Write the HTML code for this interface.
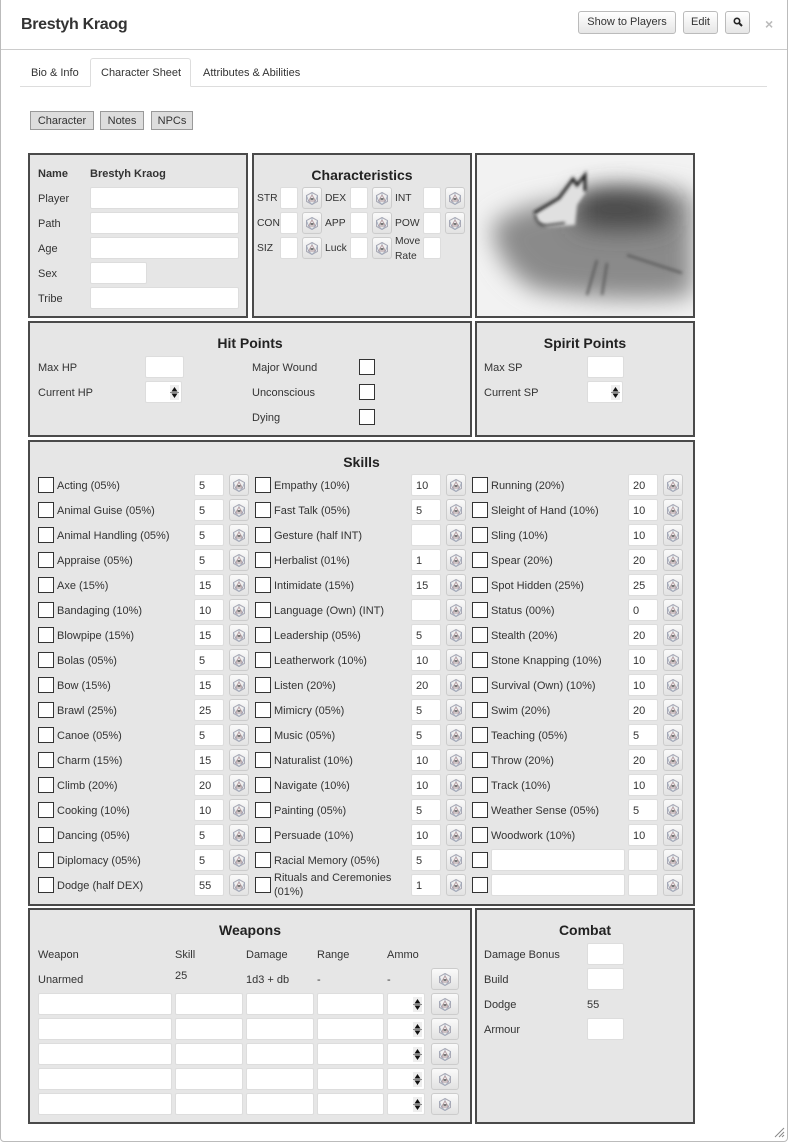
<!DOCTYPE html>
<html><head><meta charset="utf-8">
<style>
*{box-sizing:border-box;margin:0;padding:0}
body{width:789px;height:1142px;background:#fff;font-family:"Liberation Sans",Arial,sans-serif;font-size:11px;color:#333;position:relative;overflow:hidden}
.a{position:absolute}
.modal{position:absolute;left:0;top:-2px;width:788px;height:1144px;border:1px solid #bbb;border-radius:0 0 4px 4px}
.btn{position:absolute;top:11px;height:23px;border:1px solid #bbb;border-radius:3px;background:linear-gradient(#fff,#e6e6e6);font-size:11px;line-height:21px;text-align:center;color:#333}
.sb{position:absolute;top:111px;height:19px;border:1px solid #999;background:#ddd;line-height:19px;text-align:center;font-size:11px}
.p{position:absolute;background:#e6e6e6;border:2px solid #4a4a4a}
.t{position:absolute;left:0;right:0;text-align:center;font-weight:bold;font-size:14px;color:#222}
.l{position:absolute;line-height:14px;white-space:nowrap;top:0}
.i{position:absolute;height:22px;background:#fff;border:1px solid #ddd;border-radius:2px;line-height:22px;padding-left:4px;font-weight:normal}
.d{position:absolute;height:22px;width:20px;border:1px solid #ccc;border-radius:3px;background:linear-gradient(#fafafa,#e2e2e2);display:flex;align-items:center;justify-content:center}
.d svg{width:12px;height:13px}
.c{position:absolute;width:16px;height:16px;background:#fff;border:1px solid #333}
.sp{position:absolute;right:2px;top:3px;width:9px;height:15px}
.col{position:absolute;top:474px}
.r{position:relative;height:25px;width:217px}
.r .c{left:0;top:3px}
.r .n{position:absolute;left:19px;top:5px;line-height:14px;white-space:nowrap}
.r .i{left:156px;top:0;width:30px}
.r .d{left:191px;top:0}
.ch{font-size:10.3px}
</style></head><body>
<svg width="0" height="0" style="position:absolute"><defs>
<g id="dd"><polygon points="6,0.5 11.5,3.5 11.5,9.5 6,12.5 0.5,9.5 0.5,3.5" fill="none" stroke="#a9a9b5" stroke-width="1"/><polygon points="6,3 9.5,9 2.5,9" fill="none" stroke="#b39aa0" stroke-width="0.9"/><path d="M6 0.5V3M0.5 3.5L2.5 9M11.5 3.5L9.5 9M6 12.5L2.5 9M6 12.5L9.5 9" stroke="#9aa7bb" stroke-width="0.7" fill="none"/><rect x="4.5" y="6" width="3" height="2" fill="#777"/></g>
<g id="spn"><rect x="0" y="0" width="9" height="15" fill="#eee"/><path d="M1.5 6.5L4.5 2L7.5 6.5Z M1.5 8.5L4.5 13L7.5 8.5Z" fill="#111"/><path d="M0 7.5H9" stroke="#888"/></g>
</defs></svg>
<div class="modal"></div>
<div class="a" style="left:21px;top:16px;font-size:16px;font-weight:bold;color:#333;letter-spacing:-0.3px">Brestyh Kraog</div>
<div class="btn" style="left:578px;width:98px">Show to Players</div>
<div class="btn" style="left:683px;width:35px">Edit</div>
<div class="btn" style="left:725px;width:25px"><svg width="10" height="10" viewBox="0 0 10 10" style="margin-top:5px"><circle cx="4" cy="4" r="2.7" fill="none" stroke="#222" stroke-width="1.6"/><path d="M6 6L9 9" stroke="#222" stroke-width="2"/></svg></div>
<div class="a" style="left:765px;top:16px;font-size:14px;color:#bbb;font-weight:bold">×</div>
<div class="a" style="left:1px;top:49px;width:786px;height:1px;background:#ccc"></div>
<div class="a" style="left:20px;top:86px;width:747px;height:1px;background:#ddd"></div>
<div class="a" style="left:90px;top:58px;width:101px;height:29px;background:#fff;border:1px solid #ddd;border-bottom-color:#fff;border-radius:3px 3px 0 0"></div>
<div class="l" style="left:31px;top:66px">Bio &amp; Info</div>
<div class="l" style="left:101px;top:66px">Character Sheet</div>
<div class="l" style="left:203px;top:66px">Attributes &amp; Abilities</div>
<div class="sb" style="left:30px;width:64px">Character</div>
<div class="sb" style="left:100px;width:44px">Notes</div>
<div class="sb" style="left:151px;width:42px">NPCs</div>

<div class="p" style="left:28px;top:153px;width:220px;height:165px"></div>
<div class="l" style="left:38px;top:167px;font-weight:bold">Name</div>
<div class="l" style="left:90px;top:167px;font-weight:bold">Brestyh Kraog</div>
<div class="l" style="left:38px;top:192px">Player</div><div class="i" style="left:90px;top:187px;width:149px"></div>
<div class="l" style="left:38px;top:217px">Path</div><div class="i" style="left:90px;top:212px;width:149px"></div>
<div class="l" style="left:38px;top:242px">Age</div><div class="i" style="left:90px;top:237px;width:149px"></div>
<div class="l" style="left:38px;top:267px">Sex</div><div class="i" style="left:90px;top:262px;width:57px"></div>
<div class="l" style="left:38px;top:292px">Tribe</div><div class="i" style="left:90px;top:287px;width:149px"></div>

<div class="p" style="left:252px;top:153px;width:220px;height:165px"><div class="t" style="top:12px">Characteristics</div></div>
<div class="l ch" style="left:257px;top:192px">STR</div><div class="i" style="left:280px;top:187px;width:18px"></div><div class="d" style="left:302px;top:187px"><svg viewBox="0 0 12 13"><use href="#dd"/></svg></div>
<div class="l ch" style="left:325px;top:192px">DEX</div><div class="i" style="left:350px;top:187px;width:18px"></div><div class="d" style="left:372px;top:187px"><svg viewBox="0 0 12 13"><use href="#dd"/></svg></div>
<div class="l ch" style="left:395px;top:192px">INT</div><div class="i" style="left:423px;top:187px;width:18px"></div><div class="d" style="left:445px;top:187px"><svg viewBox="0 0 12 13"><use href="#dd"/></svg></div>
<div class="l ch" style="left:257px;top:217px">CON</div><div class="i" style="left:280px;top:212px;width:18px"></div><div class="d" style="left:302px;top:212px"><svg viewBox="0 0 12 13"><use href="#dd"/></svg></div>
<div class="l ch" style="left:325px;top:217px">APP</div><div class="i" style="left:350px;top:212px;width:18px"></div><div class="d" style="left:372px;top:212px"><svg viewBox="0 0 12 13"><use href="#dd"/></svg></div>
<div class="l ch" style="left:395px;top:217px">POW</div><div class="i" style="left:423px;top:212px;width:18px"></div><div class="d" style="left:445px;top:212px"><svg viewBox="0 0 12 13"><use href="#dd"/></svg></div>
<div class="l ch" style="left:257px;top:242px">SIZ</div><div class="i" style="left:280px;top:237px;width:18px"></div><div class="d" style="left:302px;top:237px"><svg viewBox="0 0 12 13"><use href="#dd"/></svg></div>
<div class="l ch" style="left:325px;top:242px">Luck</div><div class="i" style="left:350px;top:237px;width:18px"></div><div class="d" style="left:372px;top:237px"><svg viewBox="0 0 12 13"><use href="#dd"/></svg></div>
<div class="l ch" style="left:395px;top:234px;line-height:15px">Move<br>Rate</div><div class="i" style="left:423px;top:237px;width:18px"></div>

<div class="p" style="left:475px;top:153px;width:220px;height:165px;background:#f2f2f2;overflow:hidden">
<svg width="216" height="161" viewBox="0 0 216 161">
<defs><filter id="bl" filterUnits="userSpaceOnUse" x="-60" y="-60" width="340" height="280"><feGaussianBlur stdDeviation="12"/></filter><filter id="bl2" filterUnits="userSpaceOnUse" x="-60" y="-60" width="340" height="280"><feGaussianBlur stdDeviation="1.5"/></filter></defs>
<path d="M15 70 Q40 50 90 45 Q160 25 216 40 L216 140 Q150 150 60 135 Q20 115 15 70Z" fill="#8a8a8a" filter="url(#bl)"/>
<path d="M100 40 Q140 25 190 45 L190 70 Q140 80 100 70Z" fill="#4a4a4a" filter="url(#bl)"/>
<path d="M58 58 L82 42 L95 24 L108 22 L108 38 L100 50 L98 70 L70 72 L60 66Z" fill="#e0e0e0" filter="url(#bl2)"/>
<path d="M57 58 L82 43 L96 24 L100 30 L108 20 L108 36" fill="none" stroke="#222" stroke-width="3" filter="url(#bl2)"/>
<path d="M58 60 Q60 72 72 70 L88 68" fill="none" stroke="#333" stroke-width="2" filter="url(#bl2)"/>
<path d="M120 105 L110 140 M130 108 L125 140 M150 100 L205 118" stroke="#555" stroke-width="2" fill="none" filter="url(#bl2)"/>
</svg></div>

<div class="p" style="left:28px;top:321px;width:444px;height:116px"><div class="t" style="top:12px">Hit Points</div></div>
<div class="l" style="left:38px;top:361px">Max HP</div><div class="i" style="left:145px;top:356px;width:39px"></div>
<div class="l" style="left:38px;top:386px">Current HP</div><div class="i" style="left:145px;top:381px;width:37px"><svg class="sp" viewBox="0 0 9 15"><use href="#spn"/></svg></div>
<div class="l" style="left:252px;top:361px">Major Wound</div><div class="c" style="left:359px;top:359px"></div>
<div class="l" style="left:252px;top:386px">Unconscious</div><div class="c" style="left:359px;top:384px"></div>
<div class="l" style="left:252px;top:411px">Dying</div><div class="c" style="left:359px;top:409px"></div>

<div class="p" style="left:475px;top:321px;width:220px;height:116px"><div class="t" style="top:12px">Spirit Points</div></div>
<div class="l" style="left:484px;top:361px">Max SP</div><div class="i" style="left:587px;top:356px;width:37px"></div>
<div class="l" style="left:484px;top:386px">Current SP</div><div class="i" style="left:587px;top:381px;width:36px"><svg class="sp" viewBox="0 0 9 15"><use href="#spn"/></svg></div>

<div class="p" style="left:28px;top:440px;width:667px;height:466px"><div class="t" style="top:12px">Skills</div></div>
<div class="col" style="left:38px">
<div class="r"><i class="c"></i><span class="n">Acting (05%)</span><b class="i">5</b><u class="d"><svg viewBox="0 0 12 13"><use href="#dd"/></svg></u></div>
<div class="r"><i class="c"></i><span class="n">Animal Guise (05%)</span><b class="i">5</b><u class="d"><svg viewBox="0 0 12 13"><use href="#dd"/></svg></u></div>
<div class="r"><i class="c"></i><span class="n">Animal Handling (05%)</span><b class="i">5</b><u class="d"><svg viewBox="0 0 12 13"><use href="#dd"/></svg></u></div>
<div class="r"><i class="c"></i><span class="n">Appraise (05%)</span><b class="i">5</b><u class="d"><svg viewBox="0 0 12 13"><use href="#dd"/></svg></u></div>
<div class="r"><i class="c"></i><span class="n">Axe (15%)</span><b class="i">15</b><u class="d"><svg viewBox="0 0 12 13"><use href="#dd"/></svg></u></div>
<div class="r"><i class="c"></i><span class="n">Bandaging (10%)</span><b class="i">10</b><u class="d"><svg viewBox="0 0 12 13"><use href="#dd"/></svg></u></div>
<div class="r"><i class="c"></i><span class="n">Blowpipe (15%)</span><b class="i">15</b><u class="d"><svg viewBox="0 0 12 13"><use href="#dd"/></svg></u></div>
<div class="r"><i class="c"></i><span class="n">Bolas (05%)</span><b class="i">5</b><u class="d"><svg viewBox="0 0 12 13"><use href="#dd"/></svg></u></div>
<div class="r"><i class="c"></i><span class="n">Bow (15%)</span><b class="i">15</b><u class="d"><svg viewBox="0 0 12 13"><use href="#dd"/></svg></u></div>
<div class="r"><i class="c"></i><span class="n">Brawl (25%)</span><b class="i">25</b><u class="d"><svg viewBox="0 0 12 13"><use href="#dd"/></svg></u></div>
<div class="r"><i class="c"></i><span class="n">Canoe (05%)</span><b class="i">5</b><u class="d"><svg viewBox="0 0 12 13"><use href="#dd"/></svg></u></div>
<div class="r"><i class="c"></i><span class="n">Charm (15%)</span><b class="i">15</b><u class="d"><svg viewBox="0 0 12 13"><use href="#dd"/></svg></u></div>
<div class="r"><i class="c"></i><span class="n">Climb (20%)</span><b class="i">20</b><u class="d"><svg viewBox="0 0 12 13"><use href="#dd"/></svg></u></div>
<div class="r"><i class="c"></i><span class="n">Cooking (10%)</span><b class="i">10</b><u class="d"><svg viewBox="0 0 12 13"><use href="#dd"/></svg></u></div>
<div class="r"><i class="c"></i><span class="n">Dancing (05%)</span><b class="i">5</b><u class="d"><svg viewBox="0 0 12 13"><use href="#dd"/></svg></u></div>
<div class="r"><i class="c"></i><span class="n">Diplomacy (05%)</span><b class="i">5</b><u class="d"><svg viewBox="0 0 12 13"><use href="#dd"/></svg></u></div>
<div class="r"><i class="c"></i><span class="n">Dodge (half DEX)</span><b class="i">55</b><u class="d"><svg viewBox="0 0 12 13"><use href="#dd"/></svg></u></div>
</div>
<div class="col" style="left:255px">
<div class="r"><i class="c"></i><span class="n">Empathy (10%)</span><b class="i">10</b><u class="d"><svg viewBox="0 0 12 13"><use href="#dd"/></svg></u></div>
<div class="r"><i class="c"></i><span class="n">Fast Talk (05%)</span><b class="i">5</b><u class="d"><svg viewBox="0 0 12 13"><use href="#dd"/></svg></u></div>
<div class="r"><i class="c"></i><span class="n">Gesture (half INT)</span><b class="i"></b><u class="d"><svg viewBox="0 0 12 13"><use href="#dd"/></svg></u></div>
<div class="r"><i class="c"></i><span class="n">Herbalist (01%)</span><b class="i">1</b><u class="d"><svg viewBox="0 0 12 13"><use href="#dd"/></svg></u></div>
<div class="r"><i class="c"></i><span class="n">Intimidate (15%)</span><b class="i">15</b><u class="d"><svg viewBox="0 0 12 13"><use href="#dd"/></svg></u></div>
<div class="r"><i class="c"></i><span class="n">Language (Own) (INT)</span><b class="i"></b><u class="d"><svg viewBox="0 0 12 13"><use href="#dd"/></svg></u></div>
<div class="r"><i class="c"></i><span class="n">Leadership (05%)</span><b class="i">5</b><u class="d"><svg viewBox="0 0 12 13"><use href="#dd"/></svg></u></div>
<div class="r"><i class="c"></i><span class="n">Leatherwork (10%)</span><b class="i">10</b><u class="d"><svg viewBox="0 0 12 13"><use href="#dd"/></svg></u></div>
<div class="r"><i class="c"></i><span class="n">Listen (20%)</span><b class="i">20</b><u class="d"><svg viewBox="0 0 12 13"><use href="#dd"/></svg></u></div>
<div class="r"><i class="c"></i><span class="n">Mimicry (05%)</span><b class="i">5</b><u class="d"><svg viewBox="0 0 12 13"><use href="#dd"/></svg></u></div>
<div class="r"><i class="c"></i><span class="n">Music (05%)</span><b class="i">5</b><u class="d"><svg viewBox="0 0 12 13"><use href="#dd"/></svg></u></div>
<div class="r"><i class="c"></i><span class="n">Naturalist (10%)</span><b class="i">10</b><u class="d"><svg viewBox="0 0 12 13"><use href="#dd"/></svg></u></div>
<div class="r"><i class="c"></i><span class="n">Navigate (10%)</span><b class="i">10</b><u class="d"><svg viewBox="0 0 12 13"><use href="#dd"/></svg></u></div>
<div class="r"><i class="c"></i><span class="n">Painting (05%)</span><b class="i">5</b><u class="d"><svg viewBox="0 0 12 13"><use href="#dd"/></svg></u></div>
<div class="r"><i class="c"></i><span class="n">Persuade (10%)</span><b class="i">10</b><u class="d"><svg viewBox="0 0 12 13"><use href="#dd"/></svg></u></div>
<div class="r"><i class="c"></i><span class="n">Racial Memory (05%)</span><b class="i">5</b><u class="d"><svg viewBox="0 0 12 13"><use href="#dd"/></svg></u></div>
<div class="r"><i class="c"></i><span class="n" style="top:-3px;line-height:14px">Rituals and Ceremonies<br>(01%)</span><b class="i">1</b><u class="d"><svg viewBox="0 0 12 13"><use href="#dd"/></svg></u></div>
</div>
<div class="col" style="left:472px">
<div class="r"><i class="c"></i><span class="n">Running (20%)</span><b class="i">20</b><u class="d"><svg viewBox="0 0 12 13"><use href="#dd"/></svg></u></div>
<div class="r"><i class="c"></i><span class="n">Sleight of Hand (10%)</span><b class="i">10</b><u class="d"><svg viewBox="0 0 12 13"><use href="#dd"/></svg></u></div>
<div class="r"><i class="c"></i><span class="n">Sling (10%)</span><b class="i">10</b><u class="d"><svg viewBox="0 0 12 13"><use href="#dd"/></svg></u></div>
<div class="r"><i class="c"></i><span class="n">Spear (20%)</span><b class="i">20</b><u class="d"><svg viewBox="0 0 12 13"><use href="#dd"/></svg></u></div>
<div class="r"><i class="c"></i><span class="n">Spot Hidden (25%)</span><b class="i">25</b><u class="d"><svg viewBox="0 0 12 13"><use href="#dd"/></svg></u></div>
<div class="r"><i class="c"></i><span class="n">Status (00%)</span><b class="i">0</b><u class="d"><svg viewBox="0 0 12 13"><use href="#dd"/></svg></u></div>
<div class="r"><i class="c"></i><span class="n">Stealth (20%)</span><b class="i">20</b><u class="d"><svg viewBox="0 0 12 13"><use href="#dd"/></svg></u></div>
<div class="r"><i class="c"></i><span class="n">Stone Knapping (10%)</span><b class="i">10</b><u class="d"><svg viewBox="0 0 12 13"><use href="#dd"/></svg></u></div>
<div class="r"><i class="c"></i><span class="n">Survival (Own) (10%)</span><b class="i">10</b><u class="d"><svg viewBox="0 0 12 13"><use href="#dd"/></svg></u></div>
<div class="r"><i class="c"></i><span class="n">Swim (20%)</span><b class="i">20</b><u class="d"><svg viewBox="0 0 12 13"><use href="#dd"/></svg></u></div>
<div class="r"><i class="c"></i><span class="n">Teaching (05%)</span><b class="i">5</b><u class="d"><svg viewBox="0 0 12 13"><use href="#dd"/></svg></u></div>
<div class="r"><i class="c"></i><span class="n">Throw (20%)</span><b class="i">20</b><u class="d"><svg viewBox="0 0 12 13"><use href="#dd"/></svg></u></div>
<div class="r"><i class="c"></i><span class="n">Track (10%)</span><b class="i">10</b><u class="d"><svg viewBox="0 0 12 13"><use href="#dd"/></svg></u></div>
<div class="r"><i class="c"></i><span class="n">Weather Sense (05%)</span><b class="i">5</b><u class="d"><svg viewBox="0 0 12 13"><use href="#dd"/></svg></u></div>
<div class="r"><i class="c"></i><span class="n">Woodwork (10%)</span><b class="i">10</b><u class="d"><svg viewBox="0 0 12 13"><use href="#dd"/></svg></u></div>
<div class="r"><i class="c"></i><b class="i" style="left:19px;width:134px"></b><b class="i"></b><u class="d"><svg viewBox="0 0 12 13"><use href="#dd"/></svg></u></div>
<div class="r"><i class="c"></i><b class="i" style="left:19px;width:134px"></b><b class="i"></b><u class="d"><svg viewBox="0 0 12 13"><use href="#dd"/></svg></u></div>
</div>

<div class="p" style="left:28px;top:908px;width:444px;height:216px"><div class="t" style="top:12px">Weapons</div></div>
<div class="l" style="left:38px;top:948px">Weapon</div>
<div class="l" style="left:175px;top:948px">Skill</div>
<div class="l" style="left:246px;top:948px">Damage</div>
<div class="l" style="left:317px;top:948px">Range</div>
<div class="l" style="left:387px;top:948px">Ammo</div>
<div class="l" style="left:38px;top:973px">Unarmed</div>
<div class="l" style="left:175px;top:969px">25</div>
<div class="l" style="left:246px;top:973px">1d3 + db</div>
<div class="l" style="left:317px;top:973px">-</div>
<div class="l" style="left:387px;top:973px">-</div>
<div class="d" style="left:431px;top:968px;width:28px"><svg viewBox="0 0 12 13"><use href="#dd"/></svg></div>
<div style="position:absolute;left:0;top:993px">
<div style="position:absolute;top:0"><b class="i" style="left:38px;width:134px"></b><b class="i" style="left:175px;width:68px"></b><b class="i" style="left:246px;width:68px"></b><b class="i" style="left:317px;width:67px"></b><b class="i" style="left:387px;width:38px"><svg class="sp" viewBox="0 0 9 15"><use href="#spn"/></svg></b><u class="d" style="left:431px;width:28px"><svg viewBox="0 0 12 13"><use href="#dd"/></svg></u></div>
<div style="position:absolute;top:25px"><b class="i" style="left:38px;width:134px"></b><b class="i" style="left:175px;width:68px"></b><b class="i" style="left:246px;width:68px"></b><b class="i" style="left:317px;width:67px"></b><b class="i" style="left:387px;width:38px"><svg class="sp" viewBox="0 0 9 15"><use href="#spn"/></svg></b><u class="d" style="left:431px;width:28px"><svg viewBox="0 0 12 13"><use href="#dd"/></svg></u></div>
<div style="position:absolute;top:50px"><b class="i" style="left:38px;width:134px"></b><b class="i" style="left:175px;width:68px"></b><b class="i" style="left:246px;width:68px"></b><b class="i" style="left:317px;width:67px"></b><b class="i" style="left:387px;width:38px"><svg class="sp" viewBox="0 0 9 15"><use href="#spn"/></svg></b><u class="d" style="left:431px;width:28px"><svg viewBox="0 0 12 13"><use href="#dd"/></svg></u></div>
<div style="position:absolute;top:75px"><b class="i" style="left:38px;width:134px"></b><b class="i" style="left:175px;width:68px"></b><b class="i" style="left:246px;width:68px"></b><b class="i" style="left:317px;width:67px"></b><b class="i" style="left:387px;width:38px"><svg class="sp" viewBox="0 0 9 15"><use href="#spn"/></svg></b><u class="d" style="left:431px;width:28px"><svg viewBox="0 0 12 13"><use href="#dd"/></svg></u></div>
<div style="position:absolute;top:100px"><b class="i" style="left:38px;width:134px"></b><b class="i" style="left:175px;width:68px"></b><b class="i" style="left:246px;width:68px"></b><b class="i" style="left:317px;width:67px"></b><b class="i" style="left:387px;width:38px"><svg class="sp" viewBox="0 0 9 15"><use href="#spn"/></svg></b><u class="d" style="left:431px;width:28px"><svg viewBox="0 0 12 13"><use href="#dd"/></svg></u></div>
</div>

<div class="p" style="left:475px;top:908px;width:220px;height:216px"><div class="t" style="top:12px">Combat</div></div>
<div class="l" style="left:484px;top:948px">Damage Bonus</div><div class="i" style="left:587px;top:943px;width:37px"></div>
<div class="l" style="left:484px;top:973px">Build</div><div class="i" style="left:587px;top:968px;width:37px"></div>
<div class="l" style="left:484px;top:998px">Dodge</div><div class="l" style="left:587px;top:998px">55</div>
<div class="l" style="left:484px;top:1023px">Armour</div><div class="i" style="left:587px;top:1018px;width:37px"></div>
<svg class="a" style="left:774px;top:1127px" width="11" height="11"><path d="M10 1L1 10M10 5L5 10M10 8L8 10" stroke="#888"/></svg>
</body></html>
